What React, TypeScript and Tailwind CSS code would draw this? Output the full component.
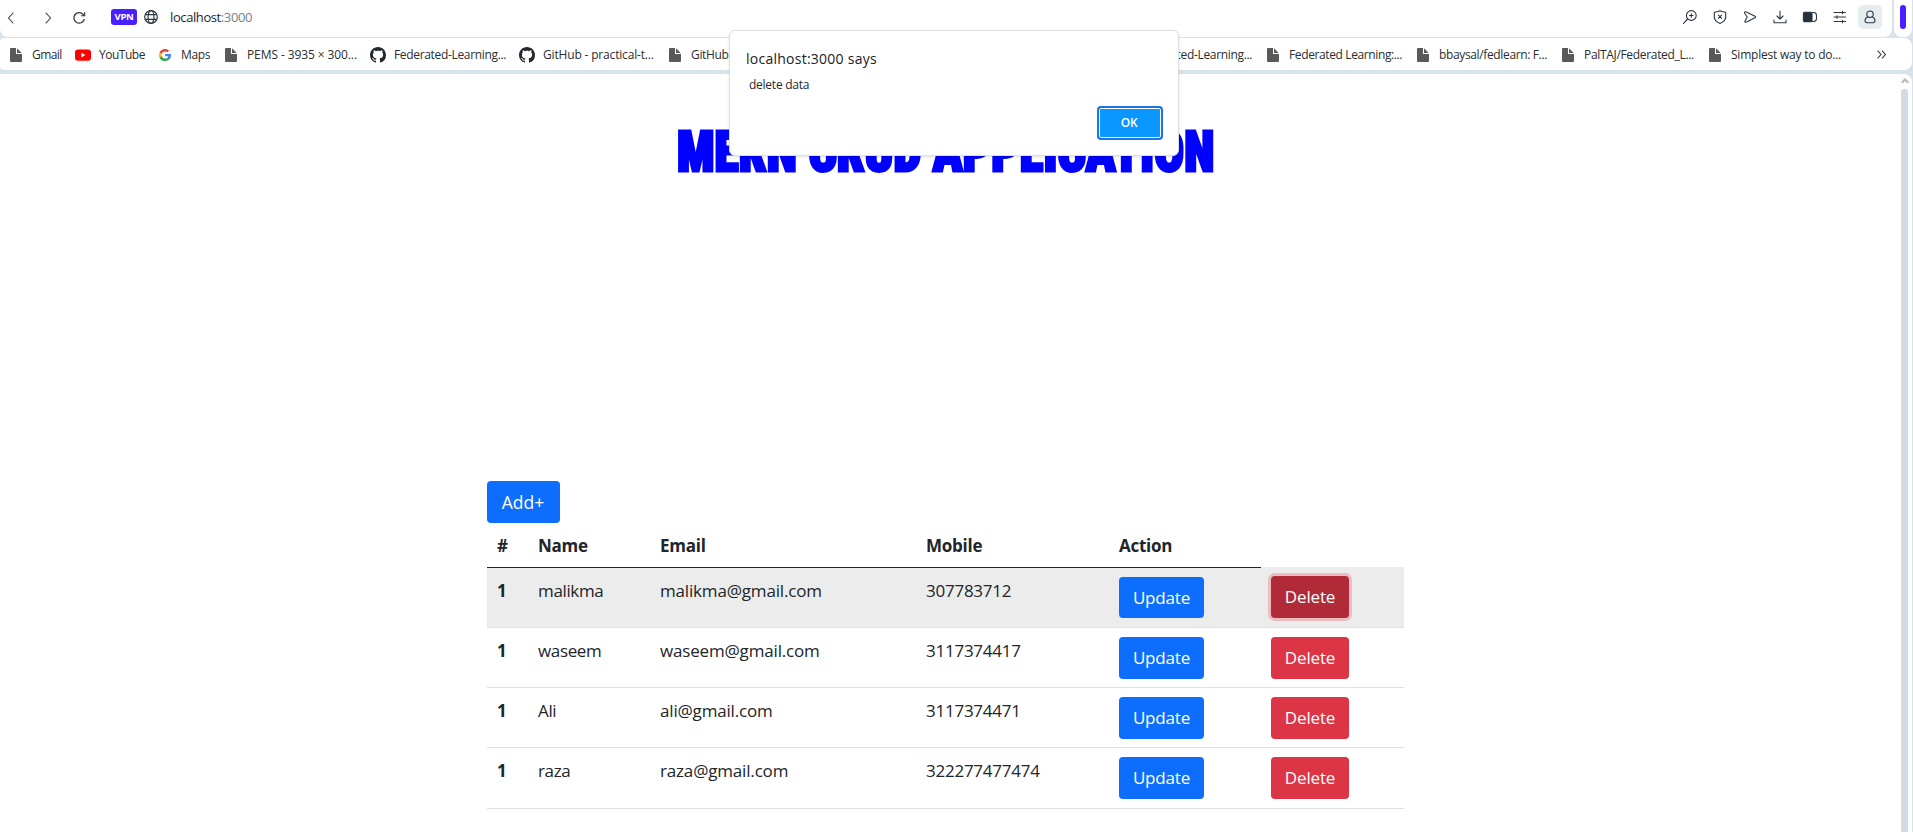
import type { ReactNode } from "react";

type Icon = "file" | "github" | "youtube" | "google";

type Bookmark = { label: string; icon: Icon; width: string; gap: string; tracking: string };

const leftBookmarks: Bookmark[] = [
  { label: "Gmail", icon: "file", width: "w-[65px]", gap: "gap-[10px]", tracking: "tracking-[-0.55px]" },
  { label: "YouTube", icon: "youtube", width: "w-[84px]", gap: "gap-[8px]", tracking: "tracking-[-0.48px]" },
  { label: "Maps", icon: "google", width: "w-[66px]", gap: "gap-[10px]", tracking: "tracking-[-0.35px]" },
  { label: "PEMS - 3935 × 300...", icon: "file", width: "w-[145px]", gap: "gap-[10px]", tracking: "tracking-[-0.1px]" },
  { label: "Federated-Learning...", icon: "github", width: "w-[149px]", gap: "gap-[8px]", tracking: "tracking-[-0.33px]" },
  { label: "GitHub - practical-t...", icon: "github", width: "w-[150px]", gap: "gap-[8px]", tracking: "tracking-[-0.17px]" },
  { label: "GitHub", icon: "file", width: "w-[433px]", gap: "gap-[10px]", tracking: "tracking-[-0.33px]" },
];

const rightBookmarks: Bookmark[] = [
  { label: "Federated-Learning...", icon: "file", width: "w-[149px]", gap: "gap-[10px]", tracking: "tracking-[-0.33px]" },
  { label: "Federated Learning:...", icon: "file", width: "w-[150px]", gap: "gap-[10px]", tracking: "tracking-[-0.38px]" },
  { label: "bbaysal/fedlearn: F...", icon: "file", width: "w-[145px]", gap: "gap-[10px]", tracking: "tracking-[-0.36px]" },
  { label: "PalTAJ/Federated_L...", icon: "file", width: "w-[147px]", gap: "gap-[10px]", tracking: "tracking-[-0.32px]" },
  { label: "Simplest way to do...", icon: "file", width: "w-[168px]", gap: "gap-[10px]", tracking: "tracking-[-0.22px]" },
];

const users = [
  { name: "malikma", email: "malikma@gmail.com", mobile: "307783712", active: true },
  { name: "waseem", email: "waseem@gmail.com", mobile: "3117374417", active: false },
  { name: "Ali", email: "ali@gmail.com", mobile: "3117374471", active: false },
  { name: "raza", email: "raza@gmail.com", mobile: "322277477474", active: false },
];

function BookmarkIcon({ icon }: { icon: Icon }) {
  if (icon === "youtube")
    return (
      <svg className="h-4 w-4 shrink-0" viewBox="0 0 16 16">
        <rect y="2.5" width="16" height="11.2" rx="3" fill="#f00" />
        <path d="M6.4 5.8v4.6l4-2.3z" fill="#fff" />
      </svg>
    );
  if (icon === "google")
    return (
      <svg className="h-3 w-3 shrink-0" viewBox="2 2 20 20">
        <path fill="#4285f4" d="M22 12.2c0-.7-.1-1.4-.2-2H12v4h5.6c-.2 1.300-1 2.400-2.100 3.100v2.600h3.300c2-1.800 3.200-4.500 3.200-7.700z" />
        <path fill="#34a853" d="M12 22c2.700 0 5-.9 6.700-2.500l-3.200-2.500c-.9.600-2.100 1-3.500 1-2.700 0-4.900-1.800-5.700-4.200H3v2.600C4.600 19.800 8 22 12 22z" />
        <path fill="#fbbc05" d="M6.300 13.800c-.2-.6-.3-1.200-.3-1.900s.1-1.300.3-1.900V7.400H3C2.300 8.800 2 10.300 2 11.900s.3 3.200 1 4.500z" />
        <path fill="#ea4335" d="M12 6c1.500 0 2.800.5 3.900 1.500l2.900-2.900C17 3 14.700 2 12 2 8 2 4.600 4.200 3 7.400L6.300 10C7.100 7.700 9.300 6 12 6z" />
      </svg>
    );
  if (icon === "github")
    return (
      <svg className="h-4 w-4 shrink-0" viewBox="0 0 16 16" fill="#24292f">
        <path d="M8 0C3.580 0 0 3.580 0 8c0 3.540 2.290 6.530 5.470 7.590.4.070.55-.17.55-.38 0-.19-.01-.82-.01-1.490-2.010.37-2.530-.49-2.690-.94-.09-.23-.48-.94-.82-1.130-.28-.15-.68-.52-.01-.53.63-.01 1.080.58 1.230.82.72 1.210 1.870.87 2.330.66.070-.52.280-.87.510-1.070-1.780-.2-3.640-.89-3.640-3.950 0-.87.310-1.590.820-2.150-.08-.2-.36-1.020.080-2.120 0 0 .67-.21 2.200.82.640-.18 1.320-.27 2-.27s1.360.09 2 .27c1.530-1.040 2.200-.82 2.200-.82.440 1.100.160 1.920.080 2.120.510.56.820 1.270.820 2.150 0 3.070-1.870 3.750-3.650 3.950.290.25.540.73.540 1.480 0 1.070-.01 1.930-.01 2.200 0 .21.150.46.550.38A8.010 8.010 0 0 0 16 8c0-4.420-3.580-8-8-8z" />
      </svg>
    );
  return (
    <svg className="h-[14px] w-3 shrink-0" viewBox="0 0 12 14" fill="#58595b">
      <path d="M1 0h5v6h6v7a1 1 0 0 1-1 1H1a1 1 0 0 1-1-1V1a1 1 0 0 1 1-1z" />
      <path d="M7 0.300 11.700 5H7z" />
    </svg>
  );
}

function BookmarkItem({ item }: { item: Bookmark }) {
  return (
    <div className={`flex shrink-0 items-center whitespace-nowrap text-[12px] text-[#2b2d31] ${item.width} ${item.gap} ${item.tracking}`}>
      <BookmarkIcon icon={item.icon} />
      <span>{item.label}</span>
    </div>
  );
}

function Glyph({ children }: { children: ReactNode }) {
  return (
    <svg className="h-4 w-4 shrink-0" viewBox="0 0 16 16" fill="none" stroke="#2d3743" strokeWidth="1.1" strokeLinecap="round" strokeLinejoin="round">
      {children}
    </svg>
  );
}

function Toolbar() {
  return (
    <div className="flex h-[37px] gap-[2px]">
      <div className="flex w-[1892px] items-start rounded-b-lg bg-white pt-[5px]">
        <div className="flex h-6 items-center pt-px pl-[3px]">
          <Glyph>
            <path d="M10 3 5.500 8l4.500 5" />
          </Glyph>
          <div className="w-[22px]" />
          <Glyph>
            <path d="M5 3l4.500 5L5 13" />
          </Glyph>
          <div className="w-[14px]" />
          <Glyph>
            <path d="M13.200 9.500a5.300 5.300 0 1 1-1-5.100l1 1.100" strokeWidth="1.300" />
            <path d="M13.700 2.500v3.300h-3.300" />
          </Glyph>
          <span className="-mt-px ml-[24px] flex h-4 w-[26px] items-center justify-center rounded-[3px] bg-[#4a1fff] text-[9.500px] font-bold tracking-[-0.3px] text-white">
            VPN
          </span>
          <svg className="-mt-px ml-[7px] h-[14px] w-[14px]" viewBox="0 0 14 14" fill="none" stroke="#2d3743" strokeWidth="1.200">
            <circle cx="7" cy="7" r="6.300" />
            <ellipse cx="7" cy="7" rx="3" ry="6.300" />
            <path d="M1.200 4.700h11.600M1.200 9.300h11.600" />
          </svg>
          <span className="ml-[12px] text-[13px] tracking-[-0.4px] text-[#23272e]">
            localhost<span className="text-[#74808e]">:3000</span>
          </span>
        </div>
        <div className="ml-auto mr-[10px] flex h-6 items-center gap-[14px]">
          <Glyph>
            <circle cx="9.300" cy="6.500" r="4.900" />
            <path d="M5.700 10 1.500 14.300M9.300 4.700v3.600M7.500 6.500h3.600" />
          </Glyph>
          <Glyph>
            <path d="M8 1.700c1.600 1 3.600 1.400 5.700 1.500v4.900c0 3-2.100 5-5.700 6.300-3.600-1.300-5.700-3.300-5.700-6.300V3.200C4.400 3.100 6.400 2.700 8 1.700z" />
            <path d="m6.400 6.200 3.200 3.200M9.600 6.200 6.400 9.400" />
          </Glyph>
          <Glyph>
            <path d="M2.800 3q.7-.5 1.600 0l8.600 4.200q1.300.8 0 1.600l-8.600 4.200q-1.600.7-1.500-.7L5.200 8 2.600 4.200q-.4-.7.2-1.200z" />
          </Glyph>
          <Glyph>
            <path d="M8 2v7.500M5 7l3 3 3-3M2 11v2.700h12V11" />
          </Glyph>
          <Glyph>
            <path d="M10.500 3.500h1.300a3 3 0 0 1 2.700 3v3a3 3 0 0 1-2.700 3h-1.300" />
            <rect x="1.400" y="3.400" width="8.600" height="9.200" rx="1" fill="#25303c" />
          </Glyph>
          <Glyph>
            <path d="M2 3.500h11.500M2 8h11.500M2 12.500h11.500M10.500 2.300v2.400M5 6.800v2.400M10.500 11.300v2.400" />
          </Glyph>
          <span className="-ml-1 flex h-6 w-6 items-center justify-center rounded-[5px] bg-[#e7ecf0]">
            <Glyph>
              <circle cx="8" cy="5.200" r="3.200" />
              <path d="M5.700 7.800C4 8.700 3 10 3 11.600c0 1.500.9 2.200 2.200 2.200h5.600c1.300 0 2.200-.7 2.200-2.200 0-1.600-1-2.900-2.700-3.800" />
            </Glyph>
          </span>
        </div>
      </div>
      <div className="flex w-[18px] justify-center rounded-lg rounded-t-none bg-white pt-[5px]">
        <span className="h-6 w-[6px] rounded-[3px] bg-[#4a1fff]" />
      </div>
    </div>
  );
}

function BookmarksBar() {
  return (
    <div className="mt-px flex h-8 w-[1912px] items-center rounded-l rounded-r-lg bg-white pt-[2px] pl-[10px]">
      {leftBookmarks.map((item) => (
        <BookmarkItem key={item.label + item.icon} item={item} />
      ))}
      <div className="w-[16px]" />
      {rightBookmarks.map((item) => (
        <BookmarkItem key={item.label} item={item} />
      ))}
      <svg className="mb-px h-[9px] w-[9px]" viewBox="0 0 9 9" fill="none" stroke="#3c4043" strokeWidth="1.100">
        <path d="m.6.600 3.400 3.900L.6 8.400M5 .6l3.400 3.900L5 8.400" />
      </svg>
    </div>
  );
}

function AlertDialog() {
  return (
    <div className="absolute left-[729px] top-[30px] flex h-[126px] w-[450px] flex-col rounded-[6px] border border-[#dddfe2] bg-white pl-4 shadow-[0_1px_3px_rgba(0,0,0,0.12)]">
      <h2 className="mt-[17px] text-[14px] leading-[22px] font-medium tracking-[0.25px] text-[#202124]">localhost:3000 says</h2>
      <p className="mt-[6px] pl-[3px] text-[12px] leading-[17px] tracking-[-0.25px] text-[#26282b]">delete data</p>
      <button className="mt-[13px] mr-[15px] flex h-[34px] w-[66px] items-center justify-center self-end rounded-[4px] border-2 border-[#1a73e8] bg-[#0a97ff] pr-[2px] text-[12px] font-semibold tracking-[-0.4px] text-white shadow-[inset_0_0_0_1px_white]">
        OK
      </button>
    </div>
  );
}

function UserTable() {
  return (
    <table className="w-[917px] table-fixed border-separate border-spacing-0 text-left align-top leading-[26px]">
      <colgroup>
        <col className="w-[41px]" />
        <col className="w-[122px]" />
        <col className="w-[266px]" />
        <col className="w-[193px]" />
        <col className="w-[152px]" />
        <col className="w-[143px]" />
      </colgroup>
      <thead>
        <tr className="h-[45px] align-top">
          {["#", "Name", "Email", "Mobile", "Action"].map((label) => (
            <th key={label} className="border-b border-[#212529] px-[10px] pt-[10px] pb-0 font-bold tracking-[-0.25px]">
              {label}
            </th>
          ))}
          <th className="border-b border-[#ececec]" />
        </tr>
      </thead>
      <tbody>
        {users.map((user) => (
          <tr
            key={user.name}
            className={`h-[60px] align-top last:h-[61px] *:border-b *:border-[#dee2e6] *:px-[10px] ${user.active ? "bg-[#ececec]" : "bg-white"}`}
          >
            <th className="pt-[10px] font-bold">1</th>
            <td className="pt-[10px] tracking-[-0.35px]">{user.name}</td>
            <td className="pt-[10px]">{user.email}</td>
            <td className="pt-[10px] tracking-[-0.25px]">{user.mobile}</td>
            <td className="pt-[9px]">
              <button className={`block w-[85px] rounded-[4px] bg-[#0d6efd] text-white ${user.active ? "h-[41px]" : "h-[42px]"}`}>Update</button>
            </td>
            <td className={user.active ? "pt-[8px]" : "pt-[9px]"}>
              <button
                className={`block h-[42px] w-[78px] rounded-[4px] text-white ${user.active ? "bg-[#b02a37] shadow-[0_0_0_3px_rgba(240,130,140,0.45)]" : "bg-[#dc3545]"}`}
              >
                Delete
              </button>
            </td>
          </tr>
        ))}
      </tbody>
    </table>
  );
}

export default function App() {
  return (
    <div className="relative flex h-[832px] w-[1913px] flex-col overflow-hidden bg-[#d8e2eb] font-['Open_Sans','Noto_Sans',sans-serif]">
      <Toolbar />
      <BookmarksBar />
      <div className="mt-1 flex w-[1912px] flex-1 rounded-tr-lg bg-white">
        <main className="flex w-[1891px] flex-col items-center text-[17px] tracking-[-0.17px] text-[#212529]">
          <h1 className="mt-[43px] h-[70px] origin-center scale-x-[0.882] font-['Roboto_Condensed','Roboto',sans-serif] text-[56px] leading-[70px] font-black tracking-[0.1px] whitespace-nowrap text-[#00f] [-webkit-text-stroke:3px_#00f]">
            MERN CRUD APPLICATION
          </h1>
          <div className="mt-[294px] w-[917px]">
            <button className="block h-[42px] w-[73px] rounded-[4px] bg-[#0d6efd] pr-px text-[17.500px] tracking-normal text-white">Add+</button>
            <UserTable />
          </div>
        </main>
        <div className="flex w-[21px] flex-col items-center pt-[4px] pl-[6px]">
          <svg className="h-[6px] w-[8px]" viewBox="0 0 8 6" fill="none" stroke="#b3b7bb" strokeWidth="2">
            <path d="m.8 4.800 3.200-3.300 3.200 3.300" />
          </svg>
          <span className="mt-[5px] w-[7px] flex-1 rounded-t-[3px] bg-[#d2dbe3]" />
        </div>
      </div>
      <AlertDialog />
    </div>
  );
}
